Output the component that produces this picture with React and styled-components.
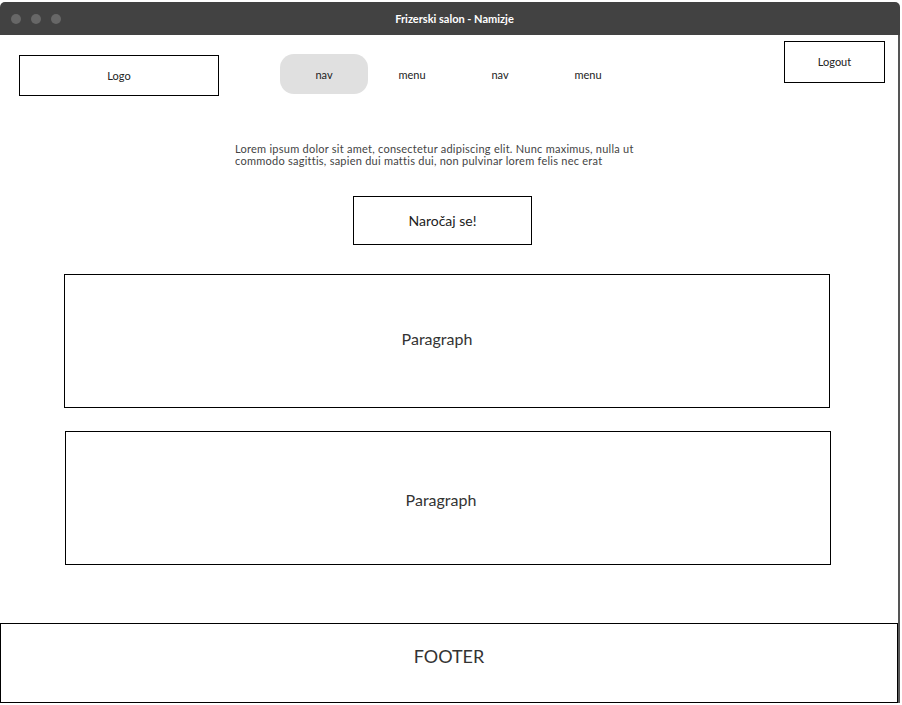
import styled, { createGlobalStyle } from "styled-components";

const GlobalStyle = createGlobalStyle`
  html, body {
    margin: 0;
    padding: 0;
    background: #ffffff;
  }
  body {
    font-family: "Lato", "Liberation Sans", sans-serif;
    color: #333333;
  }
`;

const navItems = [
  { label: "nav", active: true },
  { label: "menu" },
  { label: "nav" },
  { label: "menu" },
];

function App() {
  return (
    <>
      <GlobalStyle />
      <Window>
        <TitleBar>
          <Dots>
            <Dot />
            <Dot />
            <Dot />
          </Dots>
          <Title>Frizerski salon - Namizje</Title>
        </TitleBar>
        <Body>
          <Header>
            <LogoBox>Logo</LogoBox>
            <Nav>
              {navItems.map((item, i) => (
                <NavItem key={i} $active={item.active}>
                  {item.label}
                </NavItem>
              ))}
            </Nav>
            <LogoutBox>Logout</LogoutBox>
          </Header>
          <Intro>
            Lorem ipsum dolor sit amet, consectetur adipiscing elit. Nunc maximus, nulla ut
            <br />
            commodo sagittis, sapien dui mattis dui, non pulvinar lorem felis nec erat
          </Intro>
          <BookButton>Naročaj se!</BookButton>
          <ParagraphBox $left={64} $top={29} $shiftX={20} $padTop={0} $padBottom={5}>
            Paragraph
          </ParagraphBox>
          <ParagraphBox $left={65} $top={23} $shiftX={14} $padTop={3} $padBottom={0}>
            Paragraph
          </ParagraphBox>
          <Footer>FOOTER</Footer>
        </Body>
      </Window>
    </>
  );
}

export default App;

const Window = styled.div`
  width: 900px;
  margin-top: 2px;
  display: flex;
  flex-direction: column;
`;

const TitleBar = styled.div`
  height: 33px;
  background-color: #424242;
  border-radius: 5px 5px 0 0;
  display: flex;
  align-items: center;
`;

const Dots = styled.div`
  display: flex;
  gap: 10px;
  padding-left: 11px;
`;

const Dot = styled.span`
  width: 10px;
  height: 10px;
  border-radius: 50%;
  background-color: #676767;
`;

const Title = styled.span`
  flex: 1;
  text-align: center;
  color: #ffffff;
  font-size: 11px;
  font-weight: bold;
  padding-right: 66px;
  margin-left: 14px;
`;

const Body = styled.div`
  height: 668px;
  border-right: 2px solid #555555;
  display: flex;
  flex-direction: column;
  box-sizing: border-box;
`;

const Header = styled.div`
  display: flex;
  align-items: flex-start;
  padding: 6px 13px 0 19px;
`;

const LogoBox = styled.div`
  width: 198px;
  height: 39px;
  margin-top: 14px;
  border: 1px solid #000000;
  display: flex;
  align-items: center;
  justify-content: center;
  font-size: 11px;
  color: #222222;
`;

const Nav = styled.div`
  display: flex;
  margin-left: 61px;
  margin-top: 13px;
`;

const NavItem = styled.div`
  width: 88px;
  height: 40px;
  border-radius: 14px;
  background-color: ${(p) => (p.$active ? "#e0e0e0" : "transparent")};
  display: flex;
  align-items: center;
  justify-content: center;
  font-size: 11px;
  color: #222222;
  padding-top: 1px;
  box-sizing: border-box;
`;

const LogoutBox = styled.div`
  margin-left: auto;
  width: 99px;
  height: 38px;
  border: 1px solid #000000;
  display: flex;
  align-items: center;
  justify-content: center;
  font-size: 11px;
  color: #222222;
  padding-bottom: 2px;
  box-sizing: content-box;
`;

const Intro = styled.p`
  margin: 47px 0 0 235px;
  font-size: 11px;
  line-height: 12px;
  letter-spacing: 0.25px;
  color: #444444;
`;

const BookButton = styled.div`
  margin: 29px 0 0 353px;
  width: 177px;
  height: 47px;
  border: 1px solid #000000;
  display: flex;
  align-items: center;
  justify-content: center;
  font-size: 14px;
  color: #222222;
`;

const ParagraphBox = styled.div`
  margin: ${(p) => p.$top}px 0 0 ${(p) => p.$left}px;
  width: 766px;
  height: 134px;
  border: 1px solid #000000;
  box-sizing: border-box;
  display: flex;
  align-items: center;
  justify-content: center;
  padding: ${(p) => `${p.$padTop}px ${p.$shiftX}px ${p.$padBottom}px 0`};
  font-size: 16px;
  color: #333333;
`;

const Footer = styled.div`
  margin-top: 58px;
  height: 80px;
  border: 1px solid #000000;
  box-shadow: 0 1px 1px #777777;
  display: flex;
  align-items: center;
  justify-content: center;
  font-size: 18px;
  color: #333333;
  padding-bottom: 15px;
  box-sizing: border-box;
`;
